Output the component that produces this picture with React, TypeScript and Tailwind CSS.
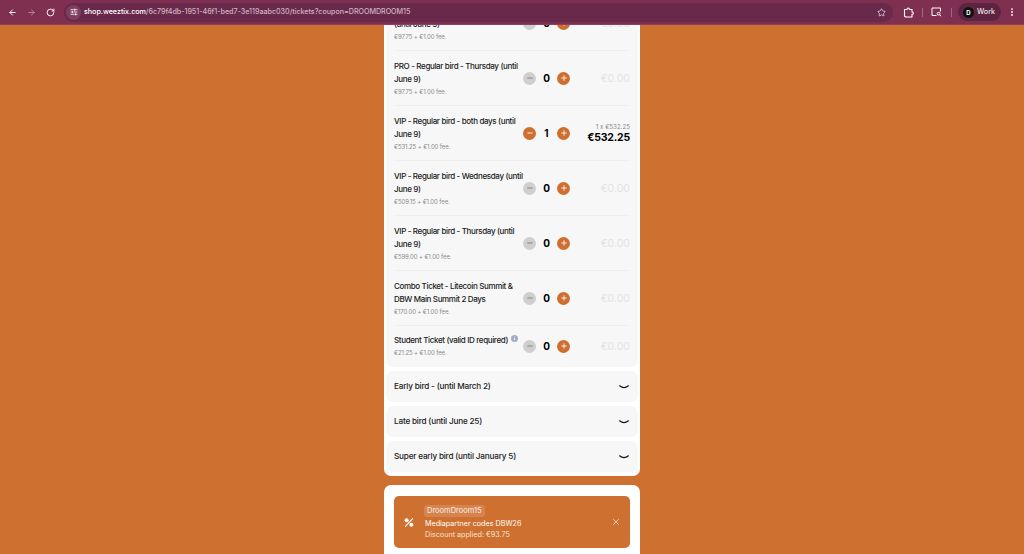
import React from 'react';
import { ArrowLeft, ArrowRight, RotateCw, SlidersHorizontal, Star, EllipsisVertical, Minus, Plus, X } from 'lucide-react';

interface Ticket { title: string; fee: string; qty: number; info?: boolean; }

const tickets: Ticket[] = [
    { title: 'PRO - Regular bird - Wednesday (until June 9)', fee: '€97.75 + €1.00 fee.', qty: 0 },
    { title: 'PRO - Regular bird - Thursday (until June 9)', fee: '€97.75 + €1.00 fee.', qty: 0 },
    { title: 'VIP - Regular bird - both days (until June 9)', fee: '€531.25 + €1.00 fee.', qty: 1 },
    { title: 'VIP - Regular bird - Wednesday (until June 9)', fee: '€509.15 + €1.00 fee.', qty: 0 },
    { title: 'VIP - Regular bird - Thursday (until June 9)', fee: '€599.00 + €1.00 fee.', qty: 0 },
    { title: 'Combo Ticket - Litecoin Summit & DBW Main Summit 2 Days', fee: '€170.00 + €1.00 fee.', qty: 0 },
    { title: 'Student Ticket (valid ID required)', fee: '€21.25 + €1.00 fee.', qty: 0, info: true },
];

const groups = ['Early bird - (until March 2)', 'Late bird (until June 25)', 'Super early bird (until January 5)'];

const ExtensionIcon = () => (
    <svg width="11" height="11" viewBox="0 0 11 11" fill="none" stroke="white" strokeWidth="1.1" strokeLinejoin="round" className="ml-[10px] shrink-0">
        <path d="M1.5 2.5 H4 Q4 1 5.2 1 Q6.4 1 6.4 2.5 H9 V5 Q10.4 5 10.4 6.2 Q10.4 7.4 9 7.4 V10 H2.5 L1.5 9 Z" />
    </svg>
);

const SidePanelIcon = () => (
    <svg width="11" height="10" viewBox="0 0 11 10" fill="none" stroke="white" strokeWidth="1" className="ml-[8px] shrink-0">
        <path d="M5.5 8.5 H1 V1 H9.5 V4.5" />
        <circle cx="7.6" cy="6.7" r="1.4" />
        <path d="M8.7 7.8 L10 9.2" />
    </svg>
);

const InfoDot = () => (
    <svg width="7" height="7" viewBox="0 0 7 7" className="inline ml-[3px] align-[1px]">
        <circle cx="3.5" cy="3.5" r="3.5" fill="#a3abc6" />
        <path d="M3.5 3 V5.2 M3.5 1.6 V2.2" stroke="white" strokeWidth="0.8" />
    </svg>
);

const ChromeBar: React.FC = () => (
    <div className="h-[25px] shrink-0 flex items-center bg-[#7f2f50] border-b border-[#8c4060]">
        <div className="w-[64px] flex items-center pl-[8px] gap-[10px] text-white">
            <ArrowLeft size={8} strokeWidth={2.5} className="w-[9px] h-[9px]" />
            <ArrowRight size={8} strokeWidth={2.5} className="w-[9px] h-[9px] text-[#b58aa0]" />
            <RotateCw size={8} strokeWidth={2.5} className="w-[9px] h-[9px]" />
        </div>
        <div className="w-[829px] h-[19px] rounded-full bg-[#69294a] flex items-center pl-[2px] pr-[7px]">
            <div className="w-[15px] h-[15px] rounded-full bg-[#7f3f5c] flex items-center justify-center text-white">
                <SlidersHorizontal size={8} strokeWidth={2.5} />
            </div>
            <span className="ml-[3px] text-[7.2px] tracking-[-0.05px] leading-none font-medium text-white whitespace-nowrap">
                shop.weeztix.com<span className="text-[#cfb4c1]">/6c79f4db-1951-46f1-bed7-3e119aabc030/tickets?coupon=DROOMDROOM15</span>
            </span>
            <Star size={9} strokeWidth={2} className="ml-auto text-[#ecdfe5]" />
        </div>
        <ExtensionIcon />
        <div className="ml-[8px] w-px h-[9px] bg-[#a06a84]" />
        <SidePanelIcon />
        <div className="ml-[9px] w-px h-[9px] bg-[#a06a84]" />
        <div className="ml-[6px] w-[43px] h-[18px] rounded-full bg-[#5c2440] flex items-center pl-[5px] gap-[3px]">
            <div className="w-[11px] h-[11px] rounded-full bg-[#111111] text-white text-[6px] font-bold flex items-center justify-center">D</div>
            <span className="text-[7.2px] font-medium text-[#f0e4ea]">Work</span>
        </div>
        <EllipsisVertical size={10} strokeWidth={2.5} className="ml-[6px] text-white" />
    </div>
);

const Stepper: React.FC<{ qty: number }> = ({ qty }) => (
    <div className="flex items-center w-[47px] justify-between">
        <div className={`w-[13px] h-[13px] rounded-full flex items-center justify-center ${qty > 0 ? 'bg-[#ce6f30] text-white' : 'bg-[#cfcfcf] text-[#777777]'}`}>
            <Minus size={8} strokeWidth={2.5} />
        </div>
        <span className="text-[10px] font-bold text-black leading-none">{qty}</span>
        <div className="w-[13px] h-[13px] rounded-full bg-[#ce6f30] text-white flex items-center justify-center">
            <Plus size={8} strokeWidth={2.5} />
        </div>
    </div>
);

const TicketRow: React.FC<{ ticket: Ticket; last: boolean }> = ({ ticket, last }) => (
    <div className={`flex items-center ${last ? 'h-[40px]' : 'h-[55px] border-b border-[#efefef]'}`}>
        <div className="w-[129px] shrink-0">
            <p className="text-[8px] tracking-[-0.35px] leading-[13px] font-medium text-[#1a1a1a]">
                {ticket.title}
                {ticket.info && <InfoDot />}
            </p>
            <p className="text-[6px] tracking-[-0.1px] leading-[11px] text-[#8a8a8a]">{ticket.fee}</p>
        </div>
        <Stepper qty={ticket.qty} />
        <div className="ml-auto text-right">
            {ticket.qty > 0 ? (
                <>
                    <p className="text-[6.2px] leading-[9px] text-[#8a8a8a]">{ticket.qty} x €532.25</p>
                    <p className="text-[10.5px] tracking-[-0.2px] leading-[13px] font-bold text-black">€532.25</p>
                </>
            ) : (
                <p className="text-[10.5px] leading-[13px] text-[#e3e3e3]">€0.00</p>
            )}
        </div>
    </div>
);

export default function App() {
    return (
        <div className="h-[554px] overflow-hidden flex flex-col bg-[#ce7030] font-['Inter',sans-serif]">
            <ChromeBar />
            {/* page is scrolled, first row is cut off by the browser bar */}
            <div className="flex-1 overflow-hidden">
                <div className="w-[256px] mx-auto -mt-[29px]">
                    <div className="bg-white rounded-b-[7px] px-[2px] pb-[4px] flex flex-col gap-[4px]">
                        <div className="bg-[#f7f7f7] rounded-b-[7px] px-[8px] pb-[1px]">
                            {tickets.map((t, i) => (
                                <TicketRow key={i} ticket={t} last={i === tickets.length - 1} />
                            ))}
                        </div>
                        {groups.map(g => (
                            <div key={g} className="h-[31px] bg-[#f7f7f7] rounded-[7px] px-[8px] flex items-center justify-between">
                                <span className="text-[8.2px] tracking-[-0.2px] font-medium text-[#1a1a1a]">{g}</span>
                                <svg width="10" height="4" viewBox="0 0 10 4" fill="none" className="mr-[1px]">
                                    <path d="M0.6 0.8 Q5 4.4 9.4 0.8" stroke="#111111" strokeWidth="1.1" strokeLinecap="round" />
                                </svg>
                            </div>
                        ))}
                    </div>
                    <div className="mt-[9px] bg-white rounded-[7px] pt-[11px] px-[10px] h-[100px]">
                        <div className="h-[52px] bg-[#ce7030] rounded-[5px] flex items-center pl-[10px] pr-[9px] text-white">
                            <svg width="10" height="9" viewBox="0 0 10 9" fill="white" className="shrink-0">
                                <circle cx="2.6" cy="2.2" r="2" />
                                <circle cx="7.4" cy="6.8" r="2" />
                                <path d="M8.6 0.6 L1.4 8.4" stroke="white" strokeWidth="1.1" strokeLinecap="round" />
                            </svg>
                            <div className="ml-[10px]">
                                <span className="block w-fit bg-[#d6834f] rounded-[3px] px-[3px] text-[7.5px] leading-[12px] text-[#fbeee6]">DroomDroom15</span>
                                <p className="ml-[1px] text-[7.2px] leading-[11px] mt-[1px]">Mediapartner codes DBW26</p>
                                <p className="ml-[1px] text-[7.2px] leading-[11px] text-[#f7e3d6]">Discount applied: €93.75</p>
                            </div>
                            <X size={10} strokeWidth={1.5} className="ml-auto" />
                        </div>
                    </div>
                </div>
            </div>
        </div>
    );
}
